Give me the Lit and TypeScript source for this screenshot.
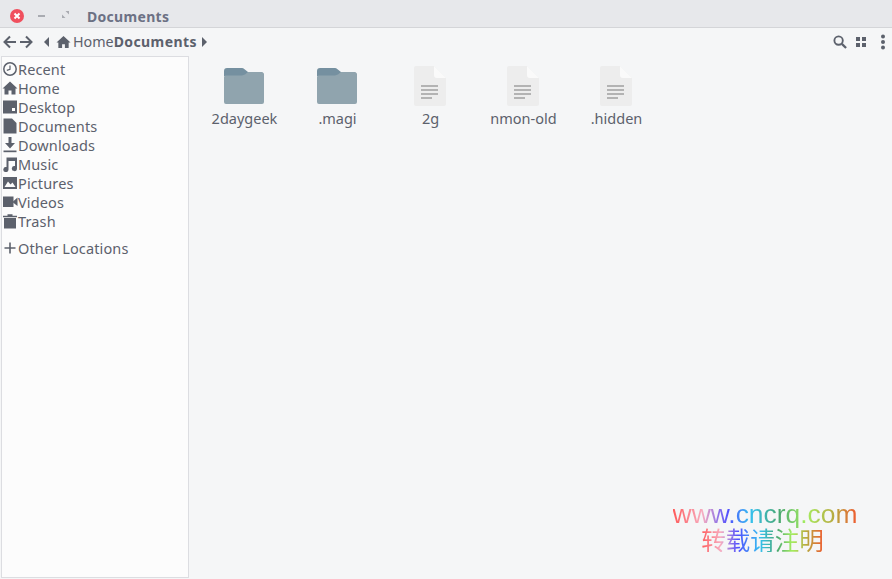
import { LitElement, html, css, svg } from "lit";
import { customElement } from "lit/decorators.js";

const ICONS: Record<string, unknown> = {
  recent: svg`<circle cx="8" cy="8" r="6.2" fill="none" stroke="currentColor" stroke-width="1.5"/><path d="M8 4.500V8.400L4.800 9.400" fill="none" stroke="currentColor" stroke-width="1.2"/>`,
  home: svg`<path d="M8 1.500 15.500 8.500H13.500V14.500H9.500V10.500H6.500V14.500H2.500V8.500H.5Z" fill="currentColor"/>`,
  desktop: svg`<path d="M1 1.500H15V14.500H1Z" fill="currentColor"/><rect x="10" y="9" width="3" height="3" fill="#fff"/>`,
  documents: svg`<path d="M1.500 .5H10L14.500 5V15.500H1.500Z" fill="currentColor"/>`,
  downloads: svg`<path d="M6.500 0H9.500V6H13L8 11.500 3 6H6.500Z" fill="currentColor"/><rect x="1.500" y="13.500" width="13" height="1.700" fill="currentColor"/>`,
  music: svg`<path d="M4.500 1.500H15V12.500A2.600 2.600 0 1 1 13 10V5H6.500V13.500A2.600 2.600 0 1 1 4.500 11Z" fill="currentColor"/>`,
  pictures: svg`<path fill-rule="evenodd" d="M1 2H15V14H1ZM2.500 12H13.500L10.500 7.500 8.500 9.500 6 6.500Z" fill="currentColor"/>`,
  videos: svg`<rect x="1" y="2.500" width="10.500" height="10.500" fill="currentColor"/><path d="M11 7.500 15.500 3.500V12L11 8.500Z" fill="currentColor"/>`,
  trash: svg`<path d="M2 5H14V15.500H2ZM1 2.800H15V4.200H1ZM5.500 1.300H10.500V2.800H5.500Z" fill="currentColor"/>`,
  plus: svg`<path d="M7.200 2.500H8.800V7.200H13.500V8.800H8.800V13.500H7.200V8.800H2.500V7.200H7.200Z" fill="currentColor"/>`,
};

const PLACES = [
  ["recent", "Recent"], ["home", "Home"], ["desktop", "Desktop"],
  ["documents", "Documents"], ["downloads", "Downloads"], ["music", "Music"],
  ["pictures", "Pictures"], ["videos", "Videos"], ["trash", "Trash"],
];

const FILES: [string, boolean][] = [
  ["2daygeek", true], [".magi", true], ["2g", false], ["nmon-old", false], [".hidden", false],
];

const folder = html`<svg class="thumb" width="40" height="38" viewBox="0 0 40 38">
  <path d="M0 4a3 3 0 0 1 3-3H18a3 3 0 0 1 2.200 1L24 5H36a4 4 0 0 1 4 4V9H0Z" fill="#7590a0"/>
  <path d="M0 10a1.500 1.500 0 0 1 1.500-1.500H18L21 7.500 24 5H37a3 3 0 0 1 3 3V35a2 2 0 0 1-2 2H2a2 2 0 0 1-2-2Z" fill="#90a4ae"/>
</svg>`;

const page = html`<svg class="thumb" width="32" height="40" viewBox="0 0 32 40">
  <path d="M2 0H20L32 12V38a2 2 0 0 1-2 2H2a2 2 0 0 1-2-2V2a2 2 0 0 1 2-2Z" fill="#ededed"/>
  <path d="M20 0 32 12H23a3 3 0 0 1-3-3Z" fill="#fafafa"/>
  <g fill="#b3b3b3"><rect x="7" y="19" width="17" height="2"/><rect x="7" y="23" width="17" height="2"/><rect x="7" y="27" width="17" height="2"/><rect x="7" y="31" width="11" height="2"/></g>
</svg>`;

@customElement("app-root")
export class AppRoot extends LitElement {
  static styles = css`
    :host {
      display: flex; flex-direction: column; position: relative;
      width: 892px; height: 579px; overflow: hidden; background: #f5f6f7;
      font-family: "Noto Sans", "Open Sans", sans-serif; color: #5c616c;
    }
    .titlebar {
      display: flex; align-items: center; height: 22px; padding-top: 5px; flex: none;
      background: #e7e8eb; border-bottom: 1px solid #d4d5d8; padding-left: 10px;
    }
    .close { width: 14px; height: 14px; display: block; }
    .min { width: 7px; height: 2px; background: #a9abb1; margin-left: 14px; }
    .max { margin: -3px 0 0 17px; display: block; }
    .title { margin-left: 18px; font-size: 14px; font-weight: 700; color: #6c7184; letter-spacing: 0.3px; }
    .toolbar { display: flex; align-items: center; height: 28px; flex: none; padding: 0 6px 0 3px; }
    .nav { display: block; }
    .nav.fwd { margin-left: 2px; }
    .crumb-arrow { display: block; margin-left: 10px; }
    .crumb-home { display: block; margin: 0 2px 0 6px; }
    .crumb { font-size: 14.300px; line-height: 20px; }
    .crumb.bold { font-weight: 700; font-size: 14px; letter-spacing: 0.4px; }
    .next { display: block; margin-left: 4px; }
    .spacer { flex: 1; }
    .tool { display: block; }
    .tool.view { margin-left: 8px; }
    .tool.menu { margin-left: 13px; }
    .content { flex: 1; display: flex; min-height: 0; padding-bottom: 1px; }
    .sidebar {
      width: 186px; margin-left: 1px; background: #fcfcfc; border: 1px solid #dcdde1;
      padding-top: 2px; flex: none;
    }
    .row { display: flex; align-items: center; height: 19px; font-size: 14.500px; letter-spacing: 0.13px; }
    .row svg { width: 16px; height: 16px; flex: none; display: block; }
    .row.other { margin-top: 8px; }
    .grid { display: flex; align-items: flex-start; padding: 10px 0 0 8px; }
    .item { width: 93px; display: flex; flex-direction: column; align-items: center; }
    .slot { height: 40px; display: flex; align-items: center; justify-content: center; }
    .thumb { display: block; }
    .label { font-size: 14.500px; line-height: 20px; margin-top: 2px; padding-left: 2px; white-space: nowrap; }
    .mark {
      position: absolute; left: 673px; top: 499px; width: 184px; display: flex; flex-direction: column; align-items: center;
    }
    .url, .cn { -webkit-background-clip: text; background-clip: text; color: transparent; display: block; white-space: nowrap; }
    .url {
      font: 26.400px/30px "Liberation Sans", sans-serif;
      background-image: linear-gradient(90deg, #ff5a5a 0%, #f7adc0 16%, #5050ff 30%, #35c0f0 42%, #4aa870 58%, #a5ee60 72%, #b8a840 88%, #f05a30 100%);
    }
    .cn {
      font: 24.500px/24px "Noto Sans CJK SC", sans-serif; margin: -1px 0 0 -5px;
      background-image: linear-gradient(90deg, #ff5a5a 0%, #f7adc0 16%, #5050ff 30%, #35c0f0 48%, #4aa870 62%, #a5ee60 74%, #b8a840 86%, #f05a30 100%);
    }
  `;

  render() {
    return html`
      <div class="titlebar">
        <svg class="close" viewBox="0 0 14 14"><circle cx="7" cy="7" r="7" fill="#f0505e"/><path d="M4.500 4.500 9.500 9.500M9.500 4.500 4.500 9.500" stroke="#fff" stroke-width="2"/></svg>
        <div class="min"></div>
        <svg class="max" width="7" height="7" viewBox="0 0 7 7"><path d="M3.500 0H7V3.500ZM0 3.500 3.500 7H0Z" fill="#a9abb1"/></svg>
        <span class="title">Documents</span>
      </div>
      <div class="toolbar">
        <svg class="nav" width="14" height="14" viewBox="0 0 14 14"><path d="M13 7H1.500M7 1.500 1.500 7 7 12.500" fill="none" stroke="currentColor" stroke-width="2"/></svg>
        <svg class="nav fwd" width="14" height="14" viewBox="0 0 14 14"><path d="M1 7H12.500M7 1.500 12.500 7 7 12.500" fill="none" stroke="currentColor" stroke-width="2"/></svg>
        <svg class="crumb-arrow" width="7" height="10" viewBox="0 0 7 10"><path d="M6 0V10L1 5Z" fill="currentColor"/></svg>
        <svg class="crumb-home" width="15" height="16" viewBox="0 0 16 16">${ICONS.home}</svg>
        <span class="crumb">Home</span><span class="crumb bold">Documents</span>
        <svg class="next" width="7" height="10" viewBox="0 0 7 10"><path d="M1 0V10L6 5Z" fill="currentColor"/></svg>
        <div class="spacer"></div>
        <svg class="tool" width="14" height="14" viewBox="0 0 15 15"><circle cx="6" cy="6" r="4.500" fill="none" stroke="currentColor" stroke-width="2"/><path d="M9.500 9.500 14 14" stroke="currentColor" stroke-width="2.400"/></svg>
        <svg class="tool view" width="12" height="12" viewBox="0 0 12 12"><g fill="currentColor"><rect x="1" y="1" width="4" height="4"/><rect x="7" y="1" width="4" height="4"/><rect x="1" y="7" width="4" height="4"/><rect x="7" y="7" width="4" height="4"/></g></svg>
        <svg class="tool menu" width="6" height="16" viewBox="0 0 6 16"><g fill="currentColor"><circle cx="3" cy="2.500" r="2"/><circle cx="3" cy="8" r="2"/><circle cx="3" cy="13.500" r="2"/></g></svg>
      </div>
      <div class="content">
        <nav class="sidebar">
          ${PLACES.map(([icon, name]) => html`<div class="row"><svg viewBox="0 0 16 16">${ICONS[icon]}</svg>${name}</div>`)}
          <div class="row other"><svg viewBox="0 0 16 16">${ICONS.plus}</svg>Other Locations</div>
        </nav>
        <main class="grid">
          ${FILES.map(([name, isDir]) => html`<div class="item"><div class="slot">${isDir ? folder : page}</div><div class="label">${name}</div></div>`)}
        </main>
      </div>
      <div class="mark"><span class="url">www.cncrq.com</span><span class="cn">转载请注明</span></div>
    `;
  }
}
